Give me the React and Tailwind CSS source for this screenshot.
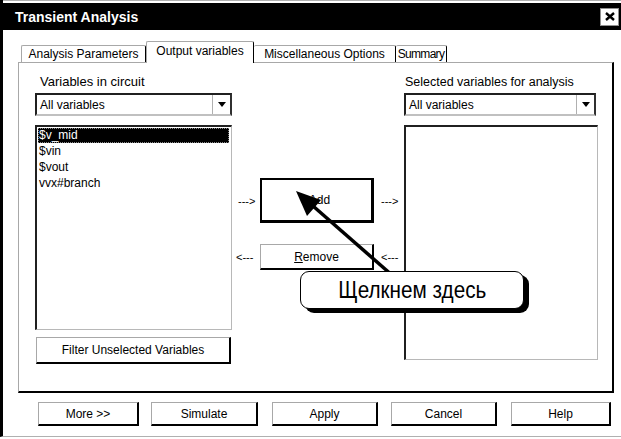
export default function App() {
  const raised =
    "border-t border-l border-t-[#a8a8a8] border-l-[#a8a8a8] border-r-2 border-b-2 border-r-black border-b-black bg-white flex items-center justify-center";
  const sunken =
    "border-t-2 border-l-2 border-t-[#202020] border-l-[#202020] border-r border-b border-r-[#b8b8b8] border-b-[#b8b8b8] bg-white";
  const Drop = ({ w }) => (
    <div className={`h-[23px] flex border-t-2 border-l-2 border-r-2 border-b-2 border-t-[#202020] border-l-[#202020] border-r-[#303030] border-b-[#c0c0c0] bg-white ${w}`}>
      <div className="flex-1 pl-[3px] flex items-center">All variables</div>
      <div className="w-[18px] border-l border-[#b0b0b0] flex items-center justify-center">
        <svg width="8" height="5" viewBox="0 0 8 5"><polygon points="0,0 8,0 4,5" fill="#000" /></svg>
      </div>
    </div>
  );
  return (
    <div className="relative w-[621px] h-[439px] bg-white overflow-hidden font-['Liberation_Sans',Arial,sans-serif] text-black text-[12px] leading-[14px]">
      <div className="h-[437px] border-l-[3px] border-black border-b border-b-[#b0b0b0] flex flex-col">
        <div className="h-[3px] border-t border-[#b0b0b0]" />
        <div className="h-[27px] bg-black flex items-center justify-between pl-[12px] pr-[2px]">
          <span className="text-white font-bold text-[14px]">Transient Analysis</span>
          <div className="w-[19px] h-[18px] bg-white border border-[#909090] flex items-center justify-center">
            <svg width="10" height="9" viewBox="0 0 10 9">
              <path d="M1 1 L9 8 M9 1 L1 8" stroke="#000" strokeWidth="2.4" />
            </svg>
          </div>
        </div>

        <div className="mt-[11px] ml-[18px] h-[21px] flex items-end">
          <div className="w-[125px] h-[17px] border-t border-l border-[#a8a8a8] border-r border-r-black rounded-t-[2px] flex items-center justify-center">Analysis Parameters</div>
          <div className="relative z-10 w-[108px] h-[22px] -mb-[1px] bg-white border-t border-l border-[#a8a8a8] border-r border-r-black rounded-t-[2px] flex items-start justify-center pt-[2px]">Output variables</div>
          <div className="w-[142px] h-[17px] border-t border-[#a8a8a8] border-r border-r-black rounded-t-[2px] flex items-center justify-center">Miscellaneous Options</div>
          <div className="w-[51px] h-[17px] border-t border-[#a8a8a8] border-r border-r-black rounded-t-[2px] flex items-center justify-center tracking-[-0.7px]">Summary</div>
        </div>

        <div className="ml-[15px] w-[596px] h-[331px] border-t border-l border-[#a8a8a8] border-r-2 border-b-2 border-r-black border-b-black flex pt-[12px]">
          <div className="ml-[16px] w-[197px] flex flex-col">
            <div className="h-[14px] pl-[5px] text-[13px]">Variables in circuit</div>
            <div className="mt-[4px]"><Drop w="w-[197px]" /></div>
            <div className={`mt-[9px] h-[205px] ${sunken} pt-[1px] pl-[1px] pr-[2px]`}>
              <div className="h-[15px] bg-black text-white outline-1 outline-dotted outline-[#888] -outline-offset-1 pl-[1px] leading-[15px]">$v_mid</div>
              <div className="pl-[1px] leading-[16px]">$vin</div>
              <div className="pl-[1px] leading-[16px]">$vout</div>
              <div className="pl-[1px] leading-[16px]">vvx#branch</div>
            </div>
            <div className={`mt-[7px] ml-[1px] w-[195px] h-[27px] ${raised}`}>Filter Unselected Variables</div>
          </div>

          <div className="w-[172px] flex flex-col">
            <div className="mt-[103px] flex items-center h-[45px]">
              <div className="w-[28px] pl-[6px] text-[11px]">---&gt;</div>
              <div className="w-[114px] h-[45px] border-2 border-black border-r-[3px] border-b-[3px] flex items-center justify-center pl-[6px]">Add</div>
              <div className="pl-[7px] text-[11px]">---&gt;</div>
            </div>
            <div className="mt-[21px] flex items-center h-[26px]">
              <div className="w-[28px] pl-[4px] text-[11px]">&lt;---</div>
              <div className={`w-[114px] h-[26px] ${raised}`}><span><span className="underline">R</span>emove</span></div>
              <div className="pl-[7px] text-[11px]">&lt;---</div>
            </div>
          </div>

          <div className="w-[194px] flex flex-col">
            <div className="h-[14px] pl-[1px] text-[12.5px]">Selected variables for analysis</div>
            <div className="mt-[4px]"><Drop w="w-[192px]" /></div>
            <div className={`mt-[9px] h-[235px] ${sunken}`} />
          </div>
        </div>

        <div className="mt-[9px] ml-[35px] flex">
          <div className={`w-[101px] h-[24px] ${raised}`}>More &gt;&gt;</div>
          <div className={`ml-[12px] w-[107px] h-[24px] ${raised}`}>Simulate</div>
          <div className={`ml-[14px] w-[106px] h-[24px] ${raised}`}>Apply</div>
          <div className={`ml-[13px] w-[106px] h-[24px] ${raised}`}>Cancel</div>
          <div className={`ml-[14px] w-[100px] h-[24px] ${raised}`}>Help</div>
        </div>
      </div>

      <svg className="absolute left-0 top-0 pointer-events-none" width="621" height="439" viewBox="0 0 621 439">
        <line x1="313" y1="206" x2="393" y2="276" stroke="#000" strokeWidth="3.5" />
        <polygon points="296,191 321,200 307,216" fill="#000" />
      </svg>

      <div className="absolute left-[300px] top-[271px] w-[224px] h-[38px] bg-white border-[1.5px] border-black rounded-[9px] shadow-[5px_4px_0_0_#000] flex items-center justify-center">
        <span className="block text-[23px] leading-[26px] scale-x-[0.9] font-['Liberation_Sans',Arial,sans-serif]">Щелкнем здесь</span>
      </div>
    </div>
  );
}
